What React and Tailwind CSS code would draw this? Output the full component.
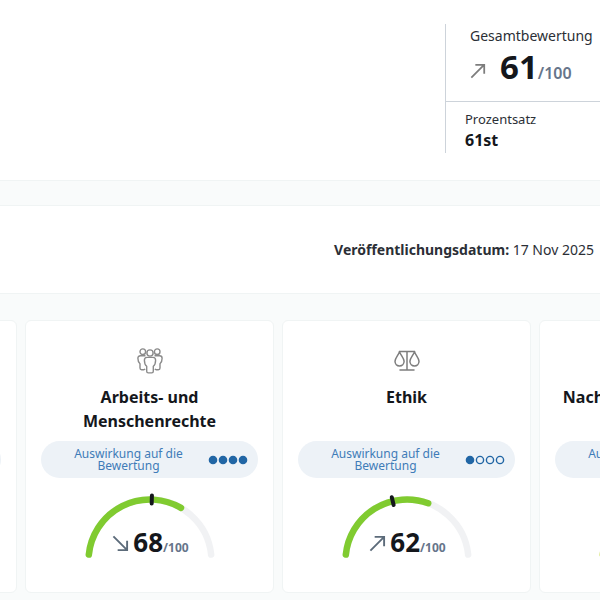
import React from 'react';

const themes = [
  { id: 'env', title: '', icon: null, impact: null, score: null },
  { id: 'labor', title: 'Arbeits- und Menschenrechte', icon: 'people', impact: 4, score: 68, average: 51, trend: 'down', color: '#80cb30' },
  { id: 'ethics', title: 'Ethik', icon: 'scales', impact: 1, score: 62, average: 42, trend: 'up', color: '#80cb30' },
  { id: 'procurement', title: 'Nachhaltige Beschaffung', icon: null, impact: 2, score: null, gauge: 40, color: '#c9dc2f' },
];

const PeopleIcon = () => (
  <svg width="26" height="26" viewBox="0 0 26 26" fill="none" stroke="#8a8a8a" strokeWidth="1.4" strokeLinejoin="round" aria-hidden="true">
    <circle cx="5.8" cy="3.7" r="2.8" />
    <circle cx="20.2" cy="3.7" r="2.8" />
    <circle cx="13" cy="5" r="3.1" />
    <path d="M8.5 7.7H3.4C1.7 7.7.9 8.8.9 10.2c0 2.4.3 4.2 2.1 5.6v4.3c0 1 .7 1.6 1.6 1.6h2.2c.6 0 1-.3 1.3-.8" />
    <path d="M17.5 7.7h5.1c1.7 0 2.5 1.1 2.5 2.5 0 2.4-.3 4.2-2.1 5.6v4.3c0 1-.7 1.6-1.6 1.6h-2.2c-.6 0-1-.3-1.3-.8" />
    <path d="M10 9.4h6c1.8 0 2.6 1.2 2.6 2.8 0 2.5-.4 4.6-2.3 6v5c0 1-.7 1.7-1.6 1.7h-3.4c-.9 0-1.6-.7-1.6-1.7v-5c-1.9-1.4-2.3-3.5-2.3-6 0-1.6.8-2.8 2.6-2.8z" />
  </svg>
);

const ScalesIcon = () => (
  <svg width="26" height="26" viewBox="0 0 26 26" fill="none" stroke="#7d7d7d" strokeWidth="1.5" strokeLinecap="round" strokeLinejoin="round" aria-hidden="true">
    <path d="M5.5 3.5h15M13 3.5V22M6 22h14" />
    <path d="M5.5 3.6C4.5 7 1 10 1 13.3c0 2.7 2 4.6 4.5 4.6s4.6-1.9 4.6-4.6C10.1 10 6.5 7 5.5 3.6z" />
    <path d="M20.5 3.6C19.5 7 15.9 10 15.9 13.3c0 2.7 2.1 4.6 4.6 4.6s4.5-1.9 4.5-4.6C25 10 21.5 7 20.5 3.6z" />
  </svg>
);

const TrendArrow = ({ direction, className }) => (
  <svg viewBox="0 0 18 18" fill="none" stroke="currentColor" strokeWidth="2" className={className} aria-hidden="true">
    {direction === 'up' ? <path d="M1.5 16.5L15.5 2.5M6 2h10v10" /> : <path d="M1.5 1.5L15.5 15.5M16 6v10H6" />}
  </svg>
);

// Arc runs from 6 to 174 degrees, measured from the left end
const point = (value, radius) => {
  const angle = ((6 + value * 1.68) * Math.PI) / 180;
  return `${66 - radius * Math.cos(angle)} ${69 - radius * Math.sin(angle)}`;
};

const arc = (value) => `M${point(0, 61.5)}A61.5 61.5 0 0 1 ${point(value, 61.5)}`;

const Gauge = ({ value, average, color }) => (
  <svg width="132" height="68" viewBox="0 0 132 68" fill="none" strokeLinecap="round" aria-hidden="true">
    <path d={arc(100)} stroke="#f1f2f4" strokeWidth="6.5" />
    <path d={arc(value)} stroke={color} strokeWidth="6.5" />
    {average && <path d={`M${point(average, 57.5)}L${point(average, 65.5)}`} stroke="#14171c" strokeWidth="4" />}
  </svg>
);

const ImpactDots = ({ level }) => (
  <svg width="40" height="10" viewBox="0 0 40 10" stroke="#2166a5" strokeWidth="1.4" aria-hidden="true">
    {[1, 2, 3, 4].map((n) => (
      <circle key={n} cx={n * 10 - 5} cy="5" r="3.6" fill={n <= level ? '#2166a5' : 'none'} />
    ))}
  </svg>
);

const ImpactPill = ({ level }) => (
  <div className="mt-2 flex h-[37px] items-center rounded-full bg-[#edf2f7] pl-2 pr-2.5">
    {level !== null && (
      <>
        <p className="flex-1 px-5 text-center text-xs leading-3 text-[#3f7cb8]">Auswirkung auf die Bewertung</p>
        <ImpactDots level={level} />
      </>
    )}
  </div>
);

const ThemeCard = ({ theme }) => (
  <article className="flex w-[249px] shrink-0 flex-col rounded-md border border-[#f0f4f4] bg-white px-[15px] pb-8 pt-[27px]">
    <div className="flex h-[26px] justify-center">
      {theme.icon === 'people' && <PeopleIcon />}
      {theme.icon === 'scales' && <ScalesIcon />}
    </div>
    <h2 className="mt-[11px] h-12 text-center text-base font-bold leading-6 text-[#14171c]">{theme.title}</h2>
    <ImpactPill level={theme.impact} />
    <div className="relative mt-3.5 flex h-[68px] justify-center">
      {(theme.score || theme.gauge) && <Gauge value={theme.score || theme.gauge} average={theme.average} color={theme.color} />}
      {theme.score && (
        <div className="absolute inset-x-0 bottom-0 flex items-baseline justify-center pl-0.5">
          <TrendArrow direction={theme.trend} className="mr-1 size-[17px] text-[#5c6b7a]" />
          <span className="text-[26px] font-bold leading-9 text-[#14171c]">{theme.score}</span>
          <span className="text-xs font-bold text-[#66758a]">/100</span>
        </div>
      )}
    </div>
  </article>
);

const App = () => (
  <div className="min-h-screen overflow-hidden bg-[#f9fbfb] font-['Noto_Sans',sans-serif] text-[#2b2f36]">
    <header className="flex justify-end border-b border-[#f0f4f4] bg-white pb-[27px] pt-6">
      <div className="w-[155px] border-l border-[#cdd3da] pb-[3px]">
        <div className="border-b border-[#cdd3da] pb-[15px] pl-6">
          <p className="text-sm leading-6">Gesamtbewertung</p>
          <div className="flex items-baseline">
            <TrendArrow direction="up" className="mr-3.5 size-4 text-[#7d7d7d]" />
            <span className="text-[33px] font-bold leading-[38px] text-[#14171c]">61</span>
            <span className="text-base font-semibold text-[#66758a]">/100</span>
          </div>
        </div>
        <div className="pl-[19px] pt-1.5">
          <p className="text-[13px] leading-[22px]">Prozentsatz</p>
          <p className="text-base font-bold leading-5 text-[#14171c]">61st</p>
        </div>
      </div>
    </header>

    <section className="mt-6 border-y border-[#f0f4f4] bg-white pb-[31px] pr-1.5 pt-8 text-right">
      <p className="text-sm leading-6">
        <strong className="font-bold">Veröffentlichungsdatum:</strong> 17 Nov 2025
      </p>
    </section>

    <main className="-ml-58 mt-[26px] flex gap-2">
      {themes.map((theme) => (
        <ThemeCard key={theme.id} theme={theme} />
      ))}
    </main>
  </div>
);

export default App;
